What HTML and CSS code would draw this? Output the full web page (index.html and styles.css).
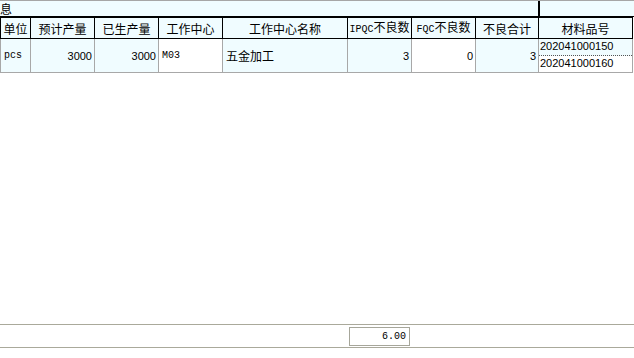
FILE: index.html
```html
<!DOCTYPE html>
<html lang="zh-CN">
<head>
<meta charset="utf-8">
<title>生产信息</title>
<link rel="stylesheet" href="styles.css">
</head>
<body>
<div class="sheet">
  <div class="title-row">
    <div class="title">息</div>
    <div class="title-side"></div>
  </div>
  <table class="grid">
    <thead>
      <tr>
        <th class="c-unit">单位</th>
        <th class="c-plan">预计产量</th>
        <th class="c-done">已生产量</th>
        <th class="c-wc">工作中心</th>
        <th class="c-wcname">工作中心名称</th>
        <th class="c-ipqc"><span class="lat">IPQC</span>不良数</th>
        <th class="c-fqc"><span class="lat">FQC</span>不良数</th>
        <th class="c-sum">不良合计</th>
        <th class="c-mat">材料品号</th>
      </tr>
    </thead>
    <tbody>
      <tr>
        <td class="tint mono">pcs</td>
        <td class="tint num">3000</td>
        <td class="tint num">3000</td>
        <td class="mono">M03</td>
        <td class="tint cjk">五金加工</td>
        <td class="tint num">3</td>
        <td class="num">0</td>
        <td class="tint num">3</td>
        <td class="mat">
          <div class="mat-line tint dotted">202041000150</div>
          <div class="mat-line">202041000160</div>
        </td>
      </tr>
    </tbody>
  </table>
  <div class="spacer"></div>
  <div class="footer">
    <div class="total">6.00</div>
  </div>
  <div class="bottom"></div>
</div>
</body>
</html>
```

FILE: styles.css
```css
html, body {
  margin: 0;
  padding: 0;
  background: #ffffff;
}

body {
  width: 634px;
  height: 358px;
  overflow: hidden;
  font-family: "Noto Sans CJK SC", "Liberation Sans", sans-serif;
  color: #000000;
}

.sheet {
  display: flex;
  flex-direction: column;
  height: 358px;
}

/* caption strip */
.title-row {
  display: flex;
  height: 17px;
  box-sizing: border-box;
  border-top: 1px solid #a6a6a6;
  border-bottom: 1px solid #000000;
  background: #f0fcff;
}

.title {
  width: 538px;
  box-sizing: border-box;
  font-size: 12px;
  line-height: 15px;
}

.title-side {
  flex: 1;
  border-left: 2px solid #000000;
}

/* grid */
.grid {
  border-collapse: separate;
  border-spacing: 0;
  table-layout: fixed;
  width: 633px;
  border-top: 1px solid #000000;
}

.grid th,
.grid td {
  box-sizing: border-box;
  padding: 0;
  overflow: hidden;
  white-space: nowrap;
}

.grid th {
  height: 19px;
  font-size: 12px;
  font-weight: normal;
  line-height: 17px;
  text-align: center;
  background: #f0fcff;
  border-right: 1px solid #000000;
  border-bottom: 1px solid #000000;
}

.grid th:first-child {
  border-left: 1px solid #000000;
}

.grid td {
  height: 34px;
  font-size: 11px;
  font-family: "Liberation Sans", sans-serif;
  border-right: 1px solid #a8a8a8;
  border-bottom: 1px solid #a8a8a8;
  vertical-align: middle;
  background: #ffffff;
}

.grid td:first-child {
  border-left: 1px solid #a8a8a8;
}

.grid td.tint {
  background: #f0fcff;
}

.c-unit { width: 31px; }
.c-plan { width: 64px; }
.c-done { width: 64px; }
.c-wc { width: 64px; }
.c-wcname { width: 125px; }
.c-ipqc { width: 64px; }
.c-fqc { width: 64px; }
.c-sum { width: 63px; }
.c-mat { width: 94px; }

.lat {
  font-family: "Liberation Mono", monospace;
  font-size: 10px;
}

.grid td.mono {
  font-family: "Liberation Mono", monospace;
  font-size: 10px;
  padding-left: 3px;
}

.grid td.num {
  text-align: right;
  padding-right: 2px;
}

.grid td.cjk {
  font-family: "Noto Sans CJK SC", sans-serif;
  font-size: 12px;
  padding-left: 3px;
}

/* stacked part numbers */
.grid td.mat {
  vertical-align: top;
}

.mat-line {
  height: 16px;
  line-height: 15px;
  padding-left: 1px;
  font-size: 11px;
  font-family: "Liberation Sans", sans-serif;
  box-sizing: border-box;
}

.mat-line.tint {
  background: #f0fcff;
}

.mat-line.dotted {
  height: 17px;
  border-bottom: 1px dotted #555555;
}

.spacer {
  flex: 1;
}

/* totals bar */
.footer {
  height: 24px;
  box-sizing: border-box;
  border-top: 1px solid #aaa99b;
  border-bottom: 1px solid #aaa99b;
  padding: 2px 0 0 349px;
}

.total {
  width: 61px;
  height: 19px;
  box-sizing: border-box;
  border: 1px solid #a6a69a;
  text-align: right;
  padding-right: 3px;
  font-family: "Liberation Mono", monospace;
  font-size: 10px;
  line-height: 17px;
}

.bottom {
  height: 10px;
}
```
